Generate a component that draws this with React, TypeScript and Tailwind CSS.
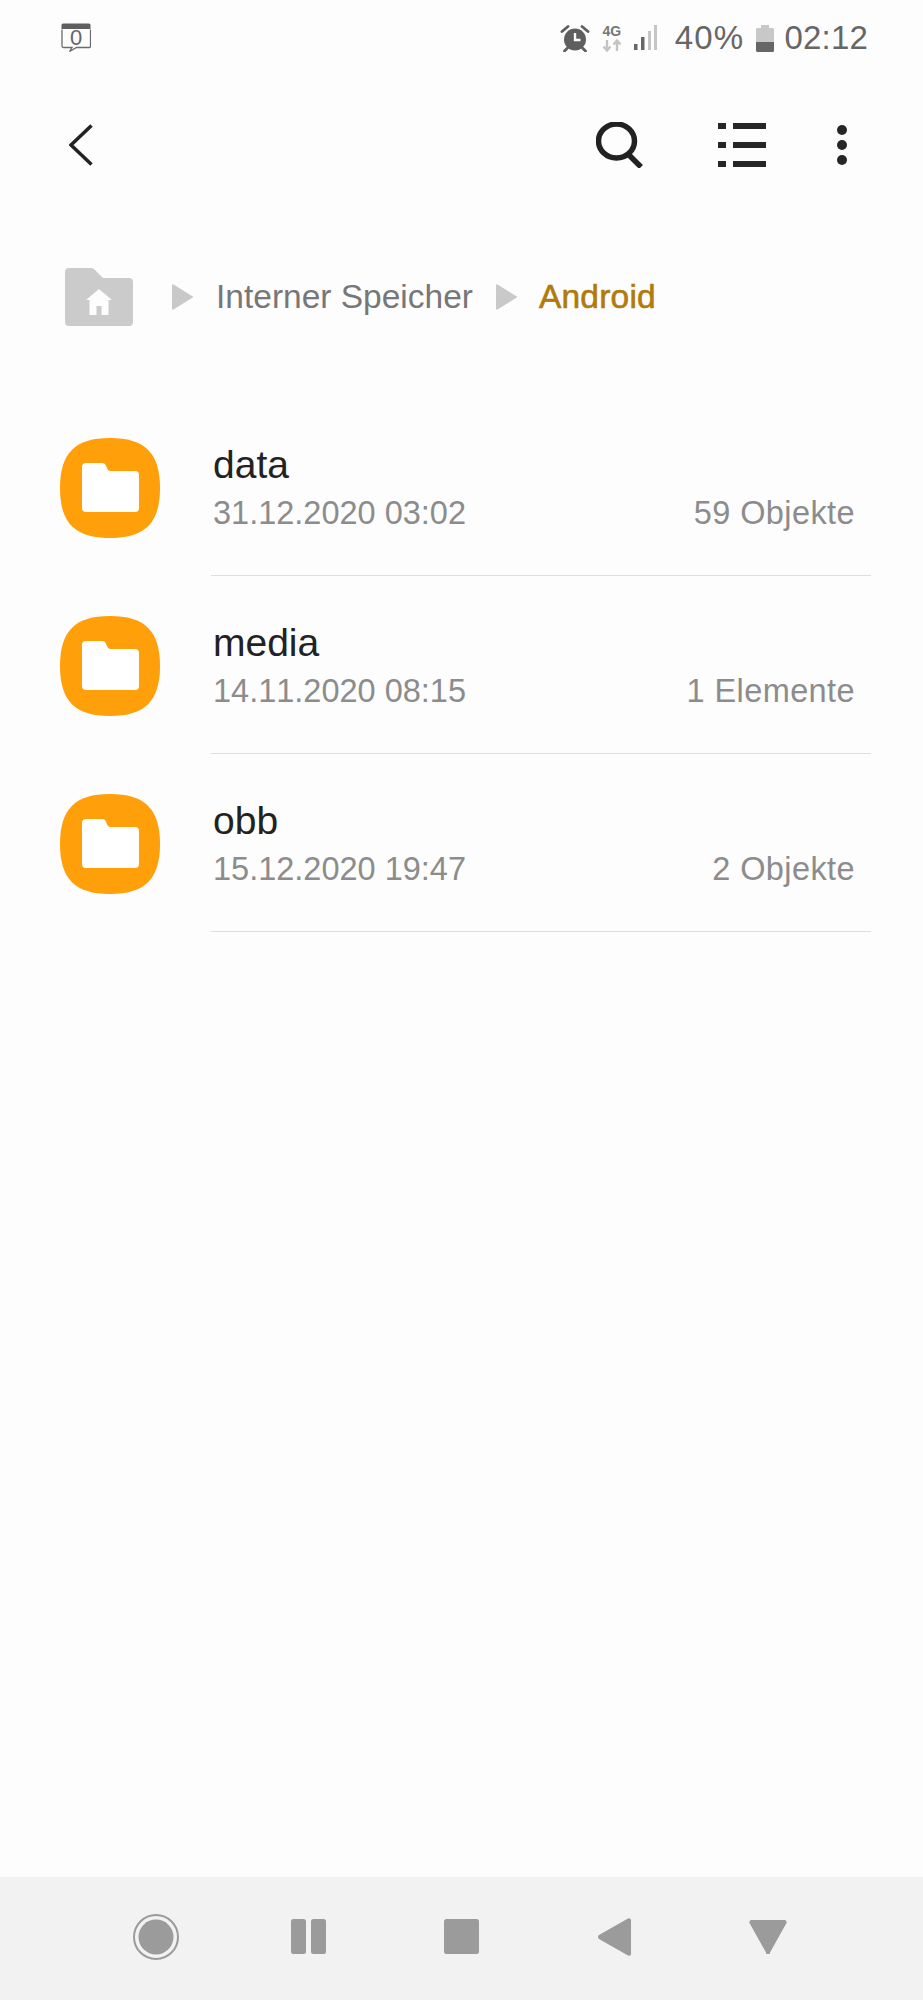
const font = { fontFamily: '"Liberation Sans", Arial, sans-serif' };

function NotificationIcon() {
  return (
    <div className="relative w-[30px] h-[30px]">
      <svg width="30" height="30" viewBox="0 0 30 30" className="absolute inset-0">
        <path d="M1 6.500V23a1.500 1.500 0 0 0 1.500 1.500H11l-2.500 4 7-4h13a1 1 0 0 0 1-1V6.500" fill="none" stroke="#6b6b6b" strokeWidth="1.300" />
        <path d="M0.500 6V2a1.500 1.500 0 0 1 1.500-1.500h26A1.500 1.500 0 0 1 29.500 2v4z" fill="#5f5f5f" />
      </svg>
      <span className="absolute left-0 right-0 top-[3px] text-center text-[22px] leading-[24px] text-[#666]">0</span>
    </div>
  );
}

function AlarmIcon() {
  return (
    <svg width="30" height="27" viewBox="0 0 30 27">
      <circle cx="15" cy="14.500" r="11" fill="#5f5f5f" />
      <path d="M15 8v7h5.500" fill="none" stroke="#fff" strokeWidth="2.400" />
      <path d="M2 6.500 8 1.500M28 6.500 22 1.500M7.500 23l-3 3M22.500 23l3 3" stroke="#5f5f5f" strokeWidth="2.800" strokeLinecap="round" />
    </svg>
  );
}

function NetworkIcon() {
  return (
    <div className="flex flex-col items-center w-[20px]">
      <span className="text-[14px] leading-[13px] font-bold text-[#777]">4G</span>
      <svg width="20" height="13" viewBox="0 0 20 13" className="mt-px">
        <path d="M5 1v10M1.500 7.500 5 11.500l3.500-4M15 12V2M11.500 5.500 15 1.500l3.500 4" fill="none" stroke="#c4c4c4" strokeWidth="2.400" />
      </svg>
    </div>
  );
}

function SignalIcon() {
  return (
    <svg width="24" height="26" viewBox="0 0 24 26">
      <rect x="1" y="19" width="3.500" height="6" fill="#666" />
      <rect x="8" y="12" width="3.500" height="13" fill="#666" />
      <rect x="15" y="6" width="3" height="19" fill="#c6c6c6" />
      <rect x="21" y="0" width="3" height="25" fill="#c6c6c6" />
    </svg>
  );
}

function BatteryIcon() {
  return (
    <svg width="18" height="27" viewBox="0 0 18 27">
      <path d="M5 0h8v3h3.500a1.500 1.500 0 0 1 1.500 1.500V17H0V4.500A1.500 1.500 0 0 1 1.500 3H5z" fill="#c8c8c8" />
      <path d="M0 17h18v8.500a1.500 1.500 0 0 1-1.500 1.500h-15A1.500 1.500 0 0 1 0 25.500z" fill="#666" />
    </svg>
  );
}

function BackIcon() {
  return (
    <svg width="24" height="42" viewBox="0 0 24 42">
      <path d="M22.500 1.500 2 21l20.500 19.500" fill="none" stroke="#222" strokeWidth="3.500" strokeLinejoin="miter" />
    </svg>
  );
}

function SearchIcon() {
  return (
    <svg width="47" height="46" viewBox="0 0 47 46">
      <ellipse cx="20.500" cy="19" rx="18" ry="17" fill="none" stroke="#222" strokeWidth="5.500" />
      <path d="M32 32l13 13" stroke="#222" strokeWidth="5.500" />
    </svg>
  );
}

function ListIcon() {
  return (
    <svg width="48" height="44" viewBox="0 0 48 44">
      <g fill="#262626">
        <rect x="0" y="0" width="8" height="6" />
        <rect x="15" y="0" width="33" height="6" />
        <rect x="0" y="19" width="8" height="6" />
        <rect x="15" y="19" width="33" height="6" />
        <rect x="0" y="38" width="8" height="6" />
        <rect x="15" y="38" width="33" height="6" />
      </g>
    </svg>
  );
}

function DotsIcon() {
  return (
    <svg width="10" height="40" viewBox="0 0 10 40">
      <g fill="#262626">
        <ellipse cx="5" cy="5" rx="5" ry="5" />
        <ellipse cx="5" cy="20" rx="5" ry="5" />
        <ellipse cx="5" cy="35" rx="5" ry="5" />
      </g>
    </svg>
  );
}

function HomeFolder() {
  return (
    <svg width="68" height="58" viewBox="0 0 68 58">
      <path d="M0 4a4 4 0 0 1 4-4h22a5 5 0 0 1 4 2l8 8h26a4 4 0 0 1 4 4v40a4 4 0 0 1-4 4H4a4 4 0 0 1-4-4z" fill="#cbcbcb" />
      <path d="M34 21 21 32h3.500v15h7V38h5v9h7V32H47z" fill="#fdfdfd" />
    </svg>
  );
}

function Chevron() {
  return (
    <svg width="21" height="26" viewBox="0 0 21 26">
      <path d="M1.500 0.500 20 12a1 1 0 0 1 0 2L1.500 25.500A1 1 0 0 1 0 24.500v-23a1 1 0 0 1 1.500-1z" fill="#c9c9c9" />
    </svg>
  );
}

function FolderTile() {
  return (
    <svg width="100" height="100" viewBox="0 0 100 100">
      <path d="M50 0C85 0 100 15 100 50C100 85 85 100 50 100C15 100 0 85 0 50C0 15 15 0 50 0Z" fill="#ff9f0a" />
      <path d="M22 29a4 4 0 0 1 4-4h16a4 4 0 0 1 4 3l1 2a4 4 0 0 0 4 3h24a4 4 0 0 1 4 4v33a4 4 0 0 1-4 4H26a4 4 0 0 1-4-4z" fill="#fff" />
    </svg>
  );
}

const rows = [
  { name: "data", date: "31.12.2020 03:02", count: "59 Objekte" },
  { name: "media", date: "14.11.2020 08:15", count: "1 Elemente" },
  { name: "obb", date: "15.12.2020 19:47", count: "2 Objekte" },
];

function NavIcons() {
  return (
    <div className="flex justify-center items-center h-full pb-[4px]">
      <div className="w-[153px] flex justify-center">
        <svg width="46" height="46" viewBox="0 0 46 46">
          <circle cx="23" cy="23" r="22" fill="none" stroke="#9b9b9b" strokeWidth="2" />
          <circle cx="23" cy="23" r="17.500" fill="#9b9b9b" />
        </svg>
      </div>
      <div className="w-[153px] flex justify-center">
        <svg width="35" height="35" viewBox="0 0 35 35">
          <rect x="0" y="0" width="15" height="35" rx="2.500" fill="#9b9b9b" />
          <rect x="20" y="0" width="15" height="35" rx="2.500" fill="#9b9b9b" />
        </svg>
      </div>
      <div className="w-[153px] flex justify-center">
        <svg width="35" height="35" viewBox="0 0 35 35">
          <rect width="35" height="35" rx="2.500" fill="#9b9b9b" />
        </svg>
      </div>
      <div className="w-[153px] flex justify-center">
        <svg width="33" height="38" viewBox="0 0 33 38">
          <path d="M30 0.500a2 2 0 0 1 3 1.500v34a2 2 0 0 1-3 1.500L1 21a2.500 2.500 0 0 1 0-4z" fill="#9b9b9b" />
        </svg>
      </div>
      <div className="w-[153px] flex justify-center">
        <svg width="38" height="34" viewBox="0 0 38 34">
          <path d="M2.500 0h33a2.200 2.200 0 0 1 2 3L21 32.500a2 2 0 0 1-4 0L0.500 3a2.200 2.200 0 0 1 2-3z" fill="#9b9b9b" />
        </svg>
      </div>
    </div>
  );
}

export default function App() {
  return (
    <div className="w-[923px] h-[2000px] bg-[#fdfdfd] flex flex-col overflow-hidden" style={font}>
      <header className="h-[76px] pl-[61px] pr-[55px] pt-[23px] flex justify-between items-start text-[#666]">
        <NotificationIcon />
        <div className="flex items-center h-[28px] mt-[1px]">
          <AlarmIcon />
          <div className="ml-[12px]"><NetworkIcon /></div>
          <div className="ml-[11px]"><SignalIcon /></div>
          <span className="ml-[18px] text-[33px] leading-[28px] tracking-[1.200px]">40%</span>
          <div className="ml-[12px]"><BatteryIcon /></div>
          <span className="ml-[10px] text-[33px] leading-[28px] tracking-[0.200px]">02:12</span>
        </div>
      </header>

      <nav className="h-[140px] flex items-center justify-between pl-[69px] pr-[76px] pb-[3px]">
        <BackIcon />
        <div className="flex items-center">
          <SearchIcon />
          <div className="ml-[75px]"><ListIcon /></div>
          <div className="ml-[71px]"><DotsIcon /></div>
        </div>
      </nav>

      <div className="h-[80px] mt-[41px] flex items-center pl-[65px] text-[33.500px] leading-[40px]">
        <HomeFolder />
        <div className="ml-[39px]"><Chevron /></div>
        <span className="ml-[23px] text-[#777]">Interner Speicher</span>
        <div className="ml-[23px]"><Chevron /></div>
        <span className="ml-[22px] text-[#b07a0c] [-webkit-text-stroke:0.6px_#b07a0c] tracking-[0.200px]">Android</span>
      </div>

      <main className="flex-1 pt-[61px]">
        {rows.map((r) => (
          <div key={r.name} className="flex h-[178px]">
            <div className="w-[211px] pl-[60px] pt-[40px] shrink-0"><FolderTile /></div>
            <div className="flex-1 mr-[52px] border-b-[1.500px] border-[#dedede] pl-[2px] pr-[16px] pt-[45px]">
              <div className="text-[39px] leading-[44px] text-[#222]">{r.name}</div>
              <div className="flex justify-between text-[32.500px] leading-[44px] text-[#8c8c8c] mt-[4px] [font-kerning:none]">
                <span>{r.date}</span>
                <span className="tracking-[0.400px]">{r.count}</span>
              </div>
            </div>
          </div>
        ))}
      </main>

      <footer className="h-[123px] bg-[#f2f2f2]">
        <NavIcons />
      </footer>
    </div>
  );
}
